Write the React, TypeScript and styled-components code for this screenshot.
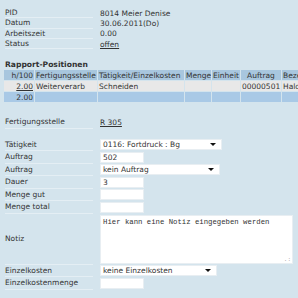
import { createGlobalStyle, styled } from "styled-components";

const GlobalStyle = createGlobalStyle`
  html, body {
    margin: 0;
    padding: 0;
    background: #d4e4ed;
  }
  body {
    font-family: "DejaVu Sans", Verdana, sans-serif;
    font-size: 7.5px;
    color: #333;
    overflow: hidden;
  }
`;

const info = [
  { label: "PID", value: "8014 Meier Denise" },
  { label: "Datum", value: "30.06.2011(Do)" },
  { label: "Arbeitszeit", value: "0.00" },
  { label: "Status", value: "offen", link: true },
];

const columns = [
  { title: "h/100", width: 30, align: "right" },
  { title: "Fertigungsstelle", width: 62, align: "left" },
  { title: "Tätigkeit/Einzelkosten", width: 86, align: "left" },
  { title: "Menge", width: 26, align: "left" },
  { title: "Einheit", width: 28, align: "left" },
  { title: "Auftrag", width: 40, align: "center" },
  { title: "Bezeichnung", width: 60, align: "left" },
];

const rows = [
  { tone: "gray", cells: ["2.00", "Weiterverarb", "Schneiden", "", "", "00000501", "Haldenweg"] },
  { tone: "blue", cells: ["2.00", "", "", "", "", "", ""] },
];

function App() {
  return (
    <>
      <GlobalStyle />
      <Page>
        <InfoGrid>
          {info.map((item) => (
            <InfoRow key={item.label}>
              <Label>{item.label}</Label>
              <Value>{item.link ? <Link>{item.value}</Link> : item.value}</Value>
            </InfoRow>
          ))}
        </InfoGrid>

        <SectionTitle>Rapport-Positionen</SectionTitle>
        <Table>
          <colgroup>
            {columns.map((c) => (
              <col key={c.title} style={{ width: c.width }} />
            ))}
          </colgroup>
          <thead>
            <tr>
              {columns.map((c) => (
                <Th key={c.title} $align={c.align}>
                  {c.title}
                </Th>
              ))}
            </tr>
          </thead>
          <tbody>
            {rows.map((r, i) => (
              <tr key={i}>
                {r.cells.map((cell, j) => (
                  <Td key={j} $tone={r.tone} $align={columns[j].align === "center" ? "left" : columns[j].align}>
                    {i === 0 && j === 0 ? <Link>{cell}</Link> : cell}
                  </Td>
                ))}
              </tr>
            ))}
          </tbody>
        </Table>

        <FormGrid $top={13}>
          <FormRow>
            <Label>Fertigungsstelle</Label>
            <Value>
              <Link>R 305</Link>
            </Value>
          </FormRow>
        </FormGrid>

        <FormGrid $top={10}>
          <FormRow>
            <Label>Tätigkeit</Label>
            <Value>
              <Select $width={122}>
                <span>0116: Fortdruck : Bg</span>
                <Arrow />
              </Select>
            </Value>
          </FormRow>
          <FormRow>
            <Label>Auftrag</Label>
            <Value>
              <Input>502</Input>
            </Value>
          </FormRow>
          <FormRow>
            <Label>Auftrag</Label>
            <Value>
              <Select $width={120}>
                <span>kein Auftrag</span>
                <Arrow />
              </Select>
            </Value>
          </FormRow>
          <FormRow>
            <Label>Dauer</Label>
            <Value>
              <Input>3</Input>
            </Value>
          </FormRow>
          <FormRow>
            <Label>Menge gut</Label>
            <Value>
              <Input />
            </Value>
          </FormRow>
          <FormRow>
            <Label>Menge total</Label>
            <Value>
              <Input />
            </Value>
          </FormRow>
          <FormRow $tall>
            <Label>Notiz</Label>
            <Value>
              <TextArea>
                Hier kann eine Notiz eingegeben werden
                <Grip>.:</Grip>
              </TextArea>
            </Value>
          </FormRow>
          <FormRow>
            <Label>Einzelkosten</Label>
            <Value>
              <Select $width={117}>
                <span>keine Einzelkosten</span>
                <Arrow />
              </Select>
            </Value>
          </FormRow>
          <FormRow>
            <Label>Einzelkostenmenge</Label>
            <Value>
              <Input />
            </Value>
          </FormRow>
        </FormGrid>
      </Page>
    </>
  );
}

export default App;

const Page = styled.div`
  width: 298px;
  height: 298px;
  padding: 8px 0 0 0;
  box-sizing: border-box;
  overflow: hidden;
`;

const InfoGrid = styled.div`
  display: grid;
  grid-auto-rows: 10.3px;
  padding-left: 5px;
`;

const InfoRow = styled.div`
  display: grid;
  grid-template-columns: 88px 1fr;
  column-gap: 7px;
  align-items: stretch;
`;

const Label = styled.div`
  display: flex;
  align-items: center;
  border-bottom: 1px solid #e4eef4;
  white-space: nowrap;
`;

const Value = styled.div`
  display: flex;
  align-items: center;
  white-space: nowrap;
`;

const Link = styled.span`
  text-decoration: underline;
`;

const SectionTitle = styled.div`
  margin: 11px 0 0 5px;
  font-weight: bold;
  font-size: 7.6px;
  line-height: 9px;
`;

const Table = styled.table`
  margin-left: 3px;
  border-spacing: 1px;
  table-layout: fixed;
  width: 340px;
`;

const Th = styled.th<{ $align: string }>`
  background: #a8c6de;
  font-weight: normal;
  height: 10px;
  padding: 0 1px;
  text-align: ${(p) => p.$align};
  white-space: nowrap;
  overflow: hidden;
`;

const Td = styled.td<{ $tone: string; $align: string }>`
  background: ${(p) => (p.$tone === "gray" ? "#e8e8e8" : "#a9c9e6")};
  height: 10px;
  padding: 0 1px;
  text-align: ${(p) => p.$align};
  white-space: nowrap;
  overflow: hidden;
`;

const FormGrid = styled.div<{ $top: number }>`
  display: grid;
  margin-top: ${(p) => p.$top}px;
  padding-left: 5px;
`;

const FormRow = styled.div<{ $tall?: boolean }>`
  display: grid;
  grid-template-columns: 88px 1fr;
  column-gap: 7px;
  height: ${(p) => (p.$tall ? 51 : 12.5)}px;
`;

const Select = styled.div<{ $width: number }>`
  box-sizing: border-box;
  width: ${(p) => p.$width}px;
  height: 11px;
  background: #fff;
  border: 1px solid #e8eef2;
  display: flex;
  align-items: center;
  justify-content: space-between;
  padding: 0 5px 0 2px;
`;

const Arrow = styled.span`
  width: 0;
  height: 0;
  border-left: 3px solid transparent;
  border-right: 3px solid transparent;
  border-top: 3px solid #111;
`;

const Input = styled.div`
  box-sizing: border-box;
  width: 44px;
  height: 11px;
  background: #fff;
  border: 1px solid #e8eef2;
  padding: 0 2px;
  display: flex;
  align-items: center;
`;

const TextArea = styled.div`
  position: relative;
  box-sizing: border-box;
  width: 193px;
  height: 49px;
  align-self: flex-start;
  margin-top: 1px;
  background: #fff;
  border: 1px solid #e8eef2;
  padding: 2px 2px;
  font-family: "Liberation Mono", "Courier New", monospace;
  font-size: 7.3px;
  line-height: 9px;
  color: #333;
`;

const Grip = styled.span`
  position: absolute;
  right: 1px;
  bottom: 0;
  font-size: 6px;
  color: #999;
  line-height: 6px;
`;
